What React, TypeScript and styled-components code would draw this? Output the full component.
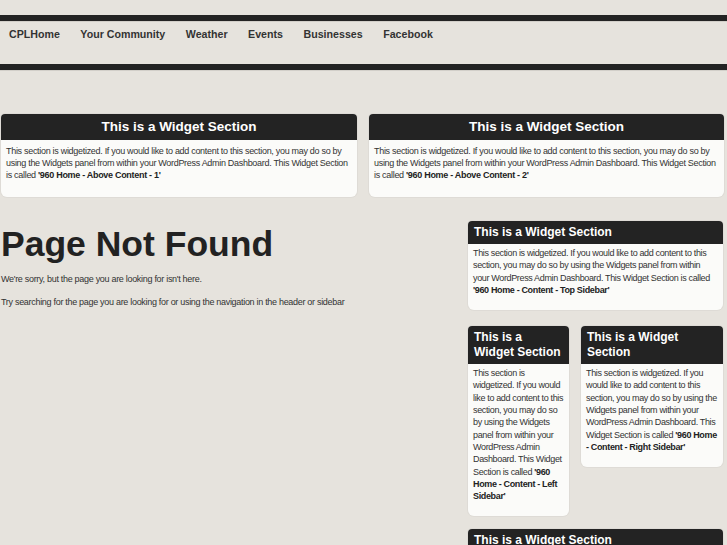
import React from "react";
import styled, { createGlobalStyle } from "styled-components";

const GlobalStyle = createGlobalStyle`
  html, body {
    margin: 0;
    padding: 0;
    background: #e6e3dd;
    font-family: "Liberation Sans", Arial, Helvetica, sans-serif;
    color: #333;
  }
`;

const Page = styled.div`
  padding-top: 15px;
  width: 727px;
  overflow: hidden;
`;

const Bar = styled.div`
  height: 6px;
  background: #232323;
  border-bottom: 1px solid #d2cfc9;
`;

const Nav = styled.nav`
  height: 42px;
  display: flex;
  gap: 20.5px;
  padding: 6px 0 0 9px;
  box-sizing: border-box;
`;

const NavItem = styled.a`
  font-size: 10.65px;
  font-weight: bold;
  line-height: 13px;
  color: #333;
  text-decoration: none;
`;

const TopRow = styled.div`
  display: grid;
  grid-template-columns: 356px 355px;
  gap: 12px;
  margin-top: 43px;
  padding-left: 1px;
`;

const Widget = styled.section`
  background: #fbfbf9;
  border-radius: 4px 4px 6px 6px;
  overflow: hidden;
  box-shadow: 0 0 0 1px rgba(0, 0, 0, 0.03);
`;

const WideTitle = styled.h3`
  margin: 0;
  height: 26px;
  line-height: 26px;
  background: #232323;
  color: #fff;
  text-align: center;
  font-size: 13.5px;
  font-weight: bold;
`;

const SideTitle = styled.h3`
  margin: 0;
  padding: 4px 4px 4px 6px;
  line-height: 15px;
  background: #232323;
  color: #fff;
  font-size: 12px;
  font-weight: bold;
`;

const WideBody = styled.p`
  margin: 0;
  padding: 5px 5px 16px;
  font-size: 9px;
  letter-spacing: -0.3px;
  line-height: 12px;
  color: #333;

  strong {
    color: #222;
  }
`;

const SideBody = styled.p`
  margin: 0;
  padding: 3px 5px 14px;
  font-size: 9px;
  letter-spacing: -0.35px;
  line-height: 12.3px;
  white-space: nowrap;
  color: #333;

  strong {
    color: #222;
  }
`;

const ContentRow = styled.div`
  display: flex;
  margin-top: 24px;
  padding-left: 1px;
`;

const Main = styled.main`
  flex: 1;
`;

const Heading = styled.h1`
  margin: 3px 0 0;
  font-size: 35.5px;
  line-height: 40px;
  font-weight: bold;
  color: #222;
`;

const Text = styled.p<{ $first?: boolean }>`
  margin: ${(p) => (p.$first ? "9px" : "0")} 0 11px;
  font-size: 9px;
  letter-spacing: -0.3px;
  line-height: 12px;
  color: #333;
`;

const Sidebar = styled.aside`
  width: 255px;
  margin: 0 4px 0 13px;
  display: flex;
  flex-direction: column;
  gap: 16px;
`;

const SplitRow = styled.div`
  display: grid;
  grid-template-columns: 101px 142px;
  gap: 12px;
  align-items: start;
  margin-bottom: -3px;
`;

const navItems = ["CPLHome", "Your Community", "Weather", "Events", "Businesses", "Facebook"];

const intro =
  "This section is widgetized. If you would like to add content to this section, you may do so by using the Widgets panel from within your WordPress Admin Dashboard. This Widget Section is called ";

export default function App() {
  return (
    <>
      <GlobalStyle />
      <Page>
        <header>
          <Bar />
          <Nav>
            {navItems.map((n) => (
              <NavItem key={n} href="#">
                {n}
              </NavItem>
            ))}
          </Nav>
          <Bar />
        </header>

        <TopRow>
          <Widget>
            <WideTitle>This is a Widget Section</WideTitle>
            <WideBody>
              {intro}
              <strong>'960 Home - Above Content - 1'</strong>
            </WideBody>
          </Widget>
          <Widget>
            <WideTitle>This is a Widget Section</WideTitle>
            <WideBody>
              {intro}
              <strong>'960 Home - Above Content - 2'</strong>
            </WideBody>
          </Widget>
        </TopRow>

        <ContentRow>
          <Main>
            <Heading>Page Not Found</Heading>
            <Text $first>We're sorry, but the page you are looking for isn't here.</Text>
            <Text>
              Try searching for the page you are looking for or using the navigation in the header or sidebar
            </Text>
          </Main>
          <Sidebar>
            <Widget>
              <SideTitle>This is a Widget Section</SideTitle>
              <SideBody>
                This section is widgetized. If you would like to add content to this
                <br />
                section, you may do so by using the Widgets panel from within
                <br />
                your WordPress Admin Dashboard. This Widget Section is called
                <br />
                <strong>'960 Home - Content - Top Sidebar'</strong>
              </SideBody>
            </Widget>
            <SplitRow>
              <Widget>
                <SideTitle>This is a Widget Section</SideTitle>
                <SideBody>
                  This section is
                  <br />
                  widgetized. If you would
                  <br />
                  like to add content to this
                  <br />
                  section, you may do so
                  <br />
                  by using the Widgets
                  <br />
                  panel from within your
                  <br />
                  WordPress Admin
                  <br />
                  Dashboard. This Widget
                  <br />
                  Section is called <strong>'960</strong>
                  <br />
                  <strong>Home - Content - Left</strong>
                  <br />
                  <strong>Sidebar'</strong>
                </SideBody>
              </Widget>
              <Widget>
                <SideTitle>This is a Widget Section</SideTitle>
                <SideBody>
                  This section is widgetized. If you
                  <br />
                  would like to add content to this
                  <br />
                  section, you may do so by using the
                  <br />
                  Widgets panel from within your
                  <br />
                  WordPress Admin Dashboard. This
                  <br />
                  Widget Section is called <strong>'960 Home</strong>
                  <br />
                  <strong>- Content - Right Sidebar'</strong>
                </SideBody>
              </Widget>
            </SplitRow>
            <Widget>
              <SideTitle>This is a Widget Section</SideTitle>
              <SideBody>
                This section is widgetized. If you would like to add content to this
                <br />
                section, you may do so by using the Widgets panel from within
                <br />
                your WordPress Admin Dashboard. This Widget Section is called
                <br />
                <strong>'960 Home - Content - Bottom Sidebar'</strong>
              </SideBody>
            </Widget>
          </Sidebar>
        </ContentRow>
      </Page>
    </>
  );
}
